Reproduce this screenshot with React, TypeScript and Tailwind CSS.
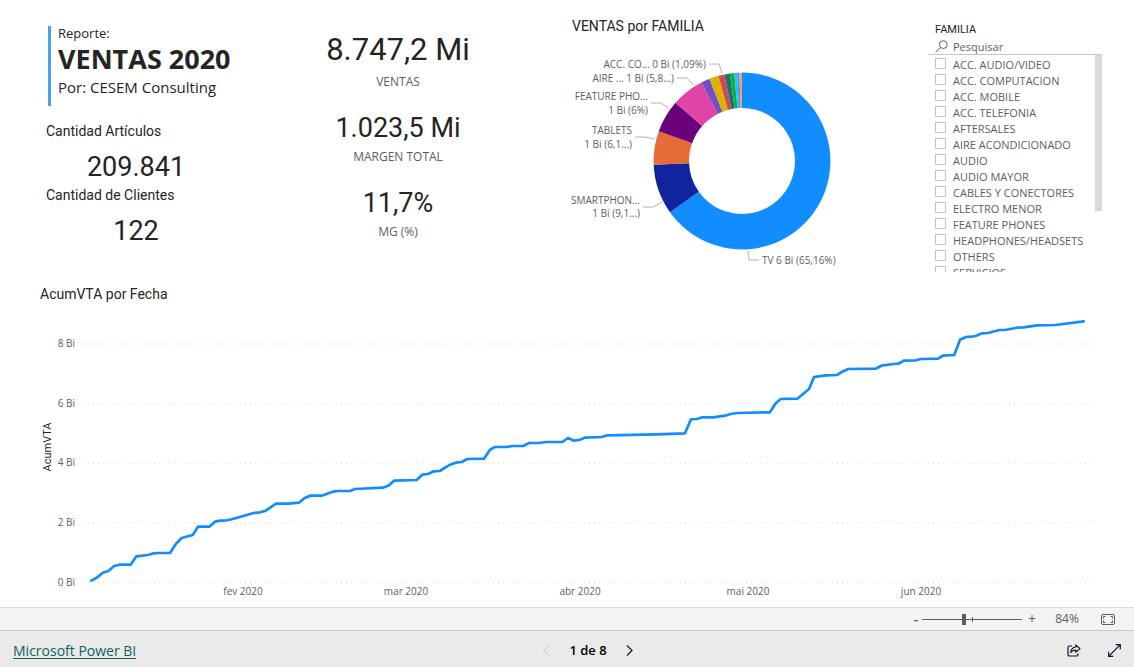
import React, { useState } from 'react';

const families = [
  'ACC. AUDIO/VIDEO',
  'ACC. COMPUTACION',
  'ACC. MOBILE',
  'ACC. TELEFONIA',
  'AFTERSALES',
  'AIRE ACONDICIONADO',
  'AUDIO',
  'AUDIO MAYOR',
  'CABLES Y CONECTORES',
  'ELECTRO MENOR',
  'FEATURE PHONES',
  'HEADPHONES/HEADSETS',
  'OTHERS',
  'SERVICIOS'
];

// Share of total sales, in percent
const slices = [
  { share: 65.16, color: '#118DFF' },
  { share: 9.15, color: '#12239E' },
  { share: 6.15, color: '#E66C37' },
  { share: 6.0, color: '#6B007B' },
  { share: 5.95, color: '#E044A7' },
  { share: 1.6, color: '#744EC2' },
  { share: 1.69, color: '#D9B300' },
  { share: 1.09, color: '#D64550' },
  { share: 1.0, color: '#197278' },
  { share: 0.83, color: '#1AAB40' },
  { share: 0.5, color: '#15C6F4' },
  { share: 0.42, color: '#4092FF' },
  { share: 0.46, color: '#FFA058' }
];

const donutLabels = [
  { lines: [{ text: 'ACC. CO... 0 Bi (1,09%)', y: 23 }], x: 134, leader: '137,19 147,19 150,28' },
  { lines: [{ text: 'AIRE ... 1 Bi (5,8...)', y: 37 }], x: 102, leader: '105,33 115,33 121,40' },
  { lines: [{ text: 'FEATURE PHO...', y: 55 }, { text: '1 Bi (6%)', y: 69 }], x: 76, leader: '79,58 89,58 97,63' },
  { lines: [{ text: 'TABLETS', y: 89 }, { text: '1 Bi (6,1...)', y: 103 }], x: 60, leader: '63,92 73,92 82,94' },
  { lines: [{ text: 'SMARTPHON...', y: 159 }, { text: '1 Bi (9,1...)', y: 172 }], x: 68, leader: '71,162 81,162 90,157' }
];

const gridLines = [
  { label: '8 Bi', y: 44 },
  { label: '6 Bi', y: 104 },
  { label: '4 Bi', y: 163 },
  { label: '2 Bi', y: 223 },
  { label: '0 Bi', y: 282.5 }
];

const months = [
  { label: 'fev 2020', x: 243 },
  { label: 'mar 2020', x: 406 },
  { label: 'abr 2020', x: 580 },
  { label: 'mai 2020', x: 748 },
  { label: 'jun 2020', x: 921 }
];

const salesLine =
  '91.3,280.7 97.3,277.3 102.7,272.7 108.3,271 114.3,266 119.7,264.7 130.7,264.7 136.3,256.3 147.7,255 153.7,253.3 159,253 170,253 ' +
  '176,243.7 181.7,238 192.7,235 198,226.7 209.3,226.7 215,221.7 220.3,220.7 226.7,220.3 231.7,219.3 253.7,213 260,212.3 265.7,210.7 ' +
  '276,203.7 288.3,203.7 299,202.7 304.3,198.3 310,195.7 321.7,195.7 332.7,191.7 338.3,191 350,191 355,189 382.7,187.7 388.3,185.7 ' +
  '394,180.7 416.7,180 422.3,174.7 428,174 433.7,171.3 439.7,171 450,164.7 455.7,162.7 461.7,162 467.3,159 484,158.7 490,149.7 ' +
  '495,147 506.7,147 512,146 523.3,146 529,143 538.3,143 546.7,142 562.3,142 568,138 574,140.7 579.3,140 584.7,137.7 601.7,137 ' +
  '607.3,135.3 656.7,134.3 685,133.3 691,119.3 696.7,119 702.3,117.3 713.3,117.3 725,115.7 730.7,114 737.3,113 770,112.3 ' +
  '775.3,103.7 780.7,99 797.3,98.7 809,89 814,77 826,75.3 837,75 842.3,71.7 848,69 875.7,68.7 881.3,65.7 893.3,64 898.3,63.7 ' +
  '903.7,60.7 915.7,60.3 921,59 938,58.7 943,55.7 954.3,55 960,39.7 966,37 971.7,36.7 976.3,35.7 982,33.3 988,33 999.3,30 ' +
  '1005.3,30 1016.7,27.7 1023.3,27.3 1037.3,25.3 1055,25 1083.7,21.3';

const slicePath = (from: number, to: number) => {
  const cx = 170;
  const cy = 116;
  const point = (share: number, r: number) => {
    const angle = (share / 100) * Math.PI * 2;
    return `${cx + r * Math.sin(angle)} ${cy - r * Math.cos(angle)}`;
  };
  const large = to - from > 50 ? 1 : 0;
  return `M${point(from, 88.4)} A88.4 88.4 0 ${large} 1 ${point(to, 88.4)} L${point(to, 53)} A53 53 0 ${large} 0 ${point(from, 53)}Z`;
};

const Kpi: React.FC<{ value: string; label: string; large?: boolean }> = ({ value, label, large }) => (
  <div>
    <p className={large ? 'text-[31px] leading-[44px]' : 'text-[27px] leading-[38px]'}>{value}</p>
    <p className="font-['Open_Sans'] text-[12px] leading-5 text-[#605e5c]">{label}</p>
  </div>
);

const Count: React.FC<{ value: string; label: string }> = ({ value, label }) => (
  <div className="w-[180px]">
    <h2 className="text-[14px] leading-[18px]">{label}</h2>
    <p className="mt-2 text-center text-[27px] leading-[38px]">{value}</p>
  </div>
);

const DonutChart: React.FC = () => {
  let start = 0;
  return (
    <svg viewBox="0 0 308 226" className="w-full overflow-visible font-['Open_Sans'] text-[10px]" role="img" aria-label="VENTAS por FAMILIA">
      {slices.map((slice) => {
        const from = start;
        start += slice.share;
        return <path key={slice.color} d={slicePath(from, start)} fill={slice.color} />;
      })}
      {donutLabels.map((label) => (
        <g key={label.leader}>
          <polyline points={label.leader} fill="none" stroke="#b3b0ad" />
          {label.lines.map((line) => (
            <text key={line.text} x={label.x} y={line.y} textAnchor="end" fill="#605e5c">
              {line.text}
            </text>
          ))}
        </g>
      ))}
      <polyline points="176,206 177,215 187,215" fill="none" stroke="#b3b0ad" />
      <text x="190" y="219" fill="#605e5c">TV 6 Bi (65,16%)</text>
    </svg>
  );
};

const LineChart: React.FC = () => (
  <svg viewBox="0 3 1134 299" className="block w-full font-['Open_Sans'] text-[10px]" role="img" aria-label="AcumVTA por Fecha">
    {gridLines.map((line) => (
      <g key={line.label}>
        <line x1="83" x2="1092" y1={line.y} y2={line.y} stroke="#d2d0ce" strokeDasharray="1 4.06" />
        <text x="75" y={line.y + 3} textAnchor="end" fill="#605e5c">{line.label}</text>
      </g>
    ))}
    {months.map((month) => (
      <text key={month.label} x={month.x} y="295" textAnchor="middle" fill="#605e5c">{month.label}</text>
    ))}
    <text transform="translate(51 147) rotate(-90)" textAnchor="middle" fill="#252423" className="font-['Roboto'] text-[11px]">
      AcumVTA
    </text>
    <polyline points={salesLine} fill="none" stroke="#118DFF" strokeWidth="2.7" strokeLinejoin="round" strokeLinecap="round" />
  </svg>
);

const FamilySlicer: React.FC = () => {
  const [search, setSearch] = useState('');
  const [selected, setSelected] = useState<string[]>([]);

  const toggle = (name: string) => {
    setSelected(selected.includes(name) ? selected.filter((item) => item !== name) : [...selected, name]);
  };

  return (
    <section className="pt-[22px]">
      <h2 className="pl-[7px] text-[11px] leading-4">FAMILIA</h2>
      <label className="flex h-[17px] items-center gap-[5px] border-b border-[#c8c6c4] pl-[7px]">
        <svg width="13" height="13" viewBox="0 0 13 13" fill="none" stroke="#605e5c" aria-hidden="true" className="shrink-0">
          <circle cx="8.3" cy="4.6" r="3.9" />
          <path d="M5.5 7.5 .6 12.4" />
        </svg>
        <input
          type="text"
          aria-label="Pesquisar"
          placeholder="Pesquisar"
          value={search}
          onChange={(e) => setSearch(e.target.value)}
          className="w-full min-w-0 pt-px font-['Open_Sans'] text-[11px] leading-4 outline-none placeholder:text-[#605e5c]"
        />
      </label>
      <div className="flex h-[217px] overflow-hidden">
        <ul className="flex-1 overflow-y-auto pt-[2px] pl-[7px] font-['Open_Sans'] text-[11px] leading-4 text-[#605e5c] [scrollbar-width:none]">
          {families
            .filter((name) => name.toLowerCase().includes(search.toLowerCase()))
            .map((name) => (
              <li key={name}>
                <label className="flex h-4 items-center gap-[7px] whitespace-nowrap">
                  <input
                    type="checkbox"
                    checked={selected.includes(name)}
                    onChange={() => toggle(name)}
                    className="mb-[3px] size-[11px] shrink-0 appearance-none border border-[#c8c6c4] checked:bg-[#605e5c]"
                  />
                  {name}
                </label>
              </li>
            ))}
        </ul>
        <div className="h-[156px] w-[7px] bg-[#d9d9d9]" />
      </div>
    </section>
  );
};

const App: React.FC = () => {
  const [zoom, setZoom] = useState(84);

  return (
    <div className="flex min-h-screen flex-col bg-white font-['Roboto',sans-serif] text-[#252423]">
      <main className="flex-1">
        <div className="grid grid-cols-[232fr_252fr_404fr_174fr] pr-8 pl-10">
          <section className="pt-[26px]">
            <div className="ml-2 h-20 border-l-[3px] border-[#4a9ff5] pl-[7px] font-['Open_Sans'] whitespace-nowrap">
              <p className="text-[13px] leading-[14px]">Reporte:</p>
              <h1 className="text-[27px] leading-[38px] font-bold">VENTAS 2020</h1>
              <p className="text-[15px] leading-[18px]">Por: CESEM Consulting</p>
            </div>
            <div className="mt-4 ml-[6px]">
              <Count label="Cantidad Artículos" value="209.841" />
              <Count label="Cantidad de Clientes" value="122" />
            </div>
          </section>

          <section className="flex flex-col gap-[17px] pt-7 text-center">
            <Kpi value="8.747,2 Mi" label="VENTAS" large />
            <Kpi value="1.023,5 Mi" label="MARGEN TOTAL" />
            <Kpi value="11,7%" label="MG (%)" />
          </section>

          <section className="px-12 pt-[17px]">
            <h2 className="text-[14px] leading-[18px]">VENTAS por FAMILIA</h2>
            <div className="pt-[10px]">
              <DonutChart />
            </div>
          </section>

          <FamilySlicer />
        </div>

        <section className="pt-[13px]">
          <h2 className="pl-10 text-[14px] leading-[18px]">AcumVTA por Fecha</h2>
          <LineChart />
        </section>
      </main>

      {/* Report zoom controls */}
      <div className="flex h-[23px] items-center justify-end border-t border-[#dcdcdc] bg-[#f4f4f4] pr-[19px] font-['Open_Sans'] text-[12px] text-[#605e5c]">
        <button type="button" aria-label="Reducir" className="w-3 text-[14px] leading-4 font-semibold">-</button>
        <div className="relative flex w-[100px] items-center">
          <div className="absolute left-1/2 h-[5px] w-px bg-[#605e5c]" />
          <input
            type="range"
            aria-label="Zoom"
            min={0}
            max={200}
            value={zoom}
            onChange={(e) => setZoom(Number(e.target.value))}
            className="relative h-3 w-full appearance-none bg-transparent [&::-webkit-slider-runnable-track]:h-px [&::-webkit-slider-runnable-track]:bg-[#605e5c] [&::-webkit-slider-thumb]:-mt-[5px] [&::-webkit-slider-thumb]:h-[11px] [&::-webkit-slider-thumb]:w-1 [&::-webkit-slider-thumb]:appearance-none [&::-webkit-slider-thumb]:bg-[#605e5c]"
          />
        </div>
        <button type="button" aria-label="Ampliar" className="w-5 text-[14px] leading-4">+</button>
        <span className="w-[50px] text-center">{zoom}%</span>
        <button type="button" aria-label="Ajustar a la página" className="ml-[9px]">
          <svg width="14" height="11" viewBox="0 0 14 11" fill="none" stroke="#605e5c" className="block">
            <rect x=".5" y=".5" width="13" height="10" rx="1.5" />
            <path d="M4.5 2.5h-2v2M9.5 2.5h2v2M4.5 8.5h-2v-2M9.5 8.5h2v-2" />
          </svg>
        </button>
      </div>

      <footer className="grid h-[37px] grid-cols-[1fr_auto_1fr] items-center border-t border-[#c8c8c8] bg-[#eaeaea] px-[13px] pt-[3px] font-['Open_Sans']">
        <a href="#" className="justify-self-start text-[14px] leading-5 text-[#0d6357] underline underline-offset-2">
          Microsoft Power BI
        </a>
        <nav className="ml-[42px] flex items-center gap-[19px] text-[13px] font-semibold text-black">
          <button type="button" aria-label="Página anterior" disabled>
            <svg width="7" height="11" viewBox="0 0 7 11" fill="none" stroke="#c0bebc" className="block">
              <path d="M6 .5 1 5.5l5 5" />
            </svg>
          </button>
          <span>1 de 8</span>
          <button type="button" aria-label="Página siguiente">
            <svg width="7" height="11" viewBox="0 0 7 11" fill="none" stroke="#252423" strokeWidth="1.3" className="block">
              <path d="m1 .5 5 5-5 5" />
            </svg>
          </button>
        </nav>
        <div className="flex items-center gap-[27px] justify-self-end">
          <button type="button" aria-label="Compartir">
            <svg width="14" height="13" viewBox="0 0 14 13" fill="none" stroke="#1b0b2b" strokeWidth="1.2" strokeLinejoin="round" className="block">
              <path d="M5 2H2.6Q1 2 1 3.6v6.8Q1 12 2.6 12h6.8Q11 12 11 10.4V9.5" />
              <path d="M8.7 1 13 4.6 8.7 8.2V6.2C6.5 6.1 5 6.9 3.8 8.5 4.1 5.5 5.8 3.3 8.7 3Z" />
            </svg>
          </button>
          <button type="button" aria-label="Pantalla completa">
            <svg width="13" height="13" viewBox="0 0 13 13" fill="none" stroke="#1b0b2b" strokeWidth="1.2" className="block">
              <path d="M.7 12.3 12.3.7M7.8.7h4.5v4.5M.7 7.8v4.5h4.5" />
            </svg>
          </button>
        </div>
      </footer>
    </div>
  );
};

export default App;
